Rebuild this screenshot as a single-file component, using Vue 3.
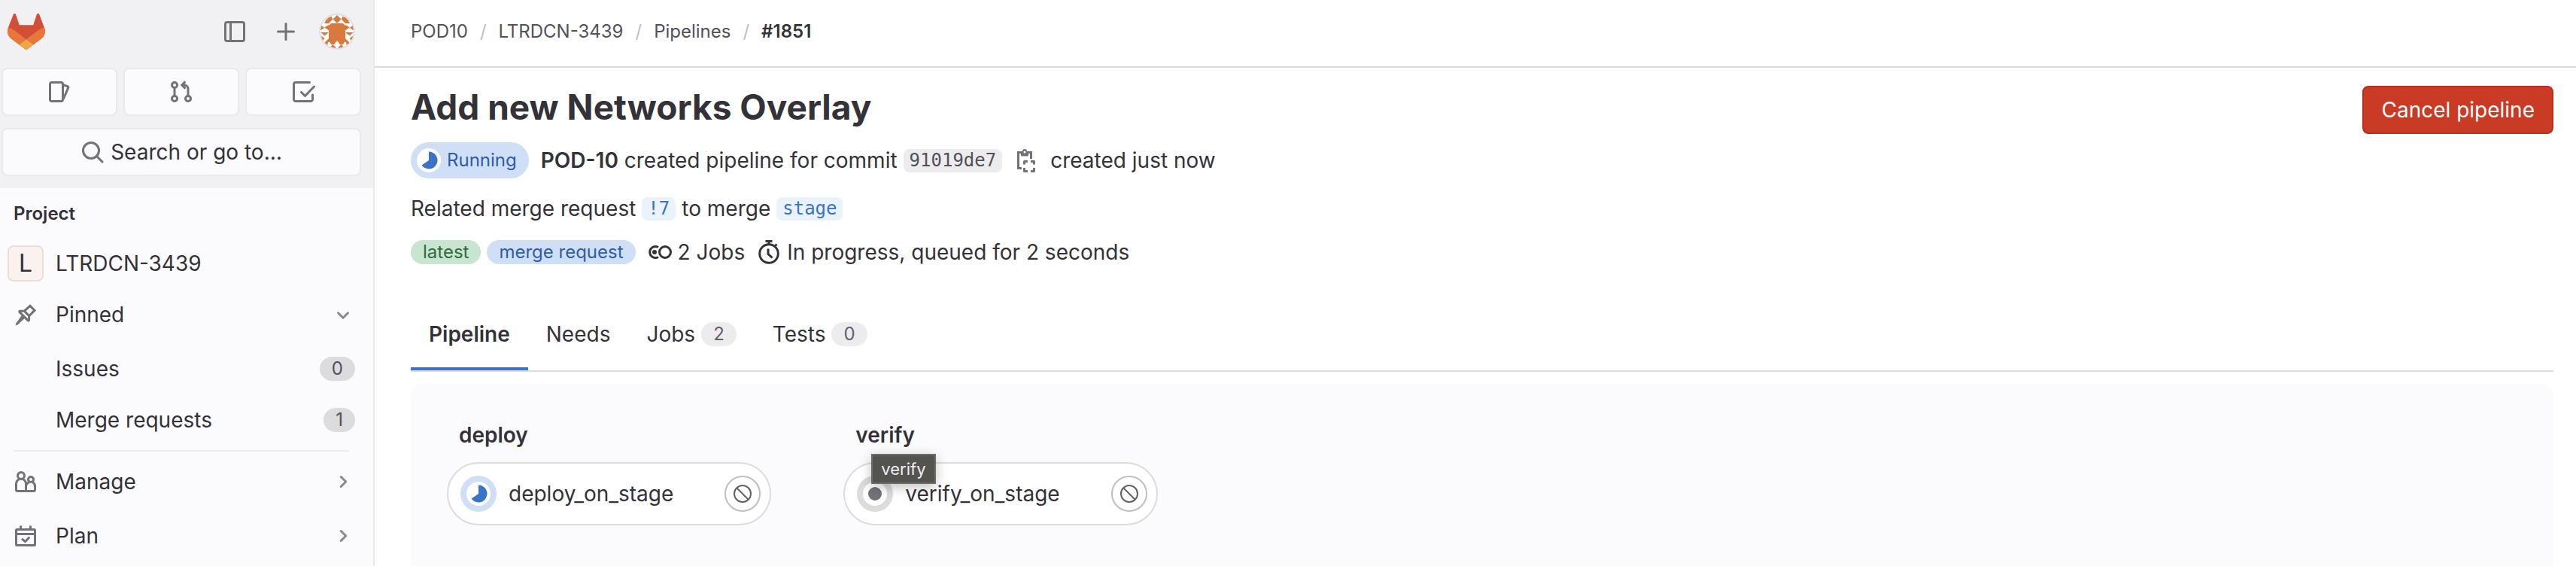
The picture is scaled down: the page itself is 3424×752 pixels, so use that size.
<script setup>
const pinned = [
  { label: 'Issues', count: 0 },
  { label: 'Merge requests', count: 1 },
]
const crumbs = ['POD10', 'LTRDCN-3439', 'Pipelines']
const tabs = [
  { label: 'Pipeline', active: true },
  { label: 'Needs' },
  { label: 'Jobs', count: 2 },
  { label: 'Tests', count: 0 },
]
const stages = [
  { name: 'deploy', job: 'deploy_on_stage', status: 'running' },
  { name: 'verify', job: 'verify_on_stage', status: 'created', tip: true },
]
</script>

<template>
  <div class="page">
    <aside class="sidebar">
      <div class="side-top">
        <div class="brand-row">
          <a href="#" class="brand" aria-label="Homepage">
            <svg width="50" height="48" viewBox="0 0 25 24">
              <path fill="#d15035" d="m24.507 9.5-.034-.09L21.082.562a.896.896 0 0 0-1.694.091l-2.29 7.01H7.825L5.535.653a.898.898 0 0 0-1.694-.09L.451 9.411.416 9.5a6.297 6.297 0 0 0 2.09 7.278l.012.01.03.022 5.16 3.867 2.56 1.935 1.554 1.176a1.051 1.051 0 0 0 1.268 0l1.555-1.176 2.56-1.935 5.197-3.89.014-.01A6.297 6.297 0 0 0 24.507 9.5Z" />
              <path fill="#e9763b" d="m24.507 9.5-.034-.09a11.44 11.44 0 0 0-4.56 2.051l-7.447 5.632 4.742 3.584 5.197-3.89.014-.01A6.297 6.297 0 0 0 24.507 9.5Z" />
              <path fill="#eea843" d="m7.707 20.677 2.56 1.935 1.555 1.176a1.051 1.051 0 0 0 1.268 0l1.555-1.176 2.56-1.935-4.743-3.584-4.755 3.584Z" />
              <path fill="#e9763b" d="M5.01 11.461a11.43 11.43 0 0 0-4.56-2.05L.416 9.5a6.297 6.297 0 0 0 2.09 7.278l.012.01.03.022 5.16 3.867 4.745-3.584-7.444-5.632Z" />
            </svg>
          </a>
          <div class="brand-actions">
            <button class="bare" aria-label="Primary navigation sidebar">
              <svg class="icon" viewBox="0 0 16 16"><rect x="1.75" y="1.75" width="12.5" height="12.5" rx="1.2" /><path d="M5.25 2v12" /></svg>
            </button>
            <button class="bare" aria-label="Create new">
              <svg class="icon round" viewBox="0 0 16 16"><path d="M8 2.75v10.5M2.75 8h10.5" /></svg>
            </button>
            <button class="bare" aria-label="User menu">
              <svg width="48" height="48" viewBox="0 0 48 48">
                <defs><clipPath id="face"><circle cx="24" cy="24" r="22" /></clipPath></defs>
                <circle cx="24" cy="24" r="24" fill="#e0e0e4" />
                <g clip-path="url(#face)">
                  <path fill="#fff" d="M0 0h48v48H0z" />
                  <g fill="#d9783f">
                    <path d="M13 16l3-3h16l3 3v20l-3 5h-4l-4-5-4 5h-4l-3-5z" />
                    <path d="m24 2 5.500 5.500L24 13l-5.500-5.500z" />
                    <path d="m13 47 5.500-6 5.500 6zM24 47l5.500-6 5.500 6z" />
                    <g v-for="side in ['', 'translate(48) scale(-1 1)']" :key="side" :transform="side || undefined">
                      <path d="M7 13l2-4 4-4 4-1 1 4-5 5z" />
                      <path d="M2 15l5 3.500L13 15v7.500l-5.500-4-5.500 4z" />
                      <path d="M2 25h11l-5.500 4.500z" />
                      <path d="M2 29l5.500 4-3.500 4-3-4z" />
                      <path d="M8 42v-4l5-5h3v4l-4 1-1 5z" />
                    </g>
                  </g>
                </g>
              </svg>
            </button>
          </div>
        </div>
        <div class="shortcuts">
          <button aria-label="Issues">
            <svg class="icon" viewBox="0 0 16 16"><rect x="1.75" y="1.75" width="8.5" height="12.5" rx="1.200" /><path d="m10.500 3.400 2.900.950a.7.7 0 0 1 .450.950l-3.350 7.700" /></svg>
          </button>
          <button aria-label="Merge requests">
            <svg class="icon" viewBox="0 0 16 16"><circle cx="3.500" cy="3.500" r="1.750" /><circle cx="3.500" cy="12.500" r="1.750" /><circle cx="12.500" cy="12.500" r="1.750" /><path d="M3.500 5.250v5.500M12.500 10.750V6a2.500 2.500 0 0 0-2.500-2.500H8.500M10.700 1.200 8.400 3.500l2.300 2.300" /></svg>
          </button>
          <button aria-label="To-Do List">
            <svg class="icon round" viewBox="0 0 16 16"><path d="M12.250 1.750H3A1.250 1.250 0 0 0 1.750 3v10A1.250 1.250 0 0 0 3 14.250h10A1.250 1.250 0 0 0 14.250 13v-3M6.750 8.250l2.500 2.500 6-6.250" /></svg>
          </button>
        </div>
        <button class="search">
          <svg class="icon round" viewBox="0 0 16 16"><circle cx="7" cy="7" r="5.250" /><path d="m11 11 3.500 3.500" /></svg>
          Search or go to…
        </button>
      </div>

      <nav class="side-nav">
        <h2>Project</h2>
        <a href="#" class="item">
          <span class="avatar">L</span>
          <span>LTRDCN-3439</span>
        </a>
        <a href="#" class="item">
          <svg class="icon lead" viewBox="0 0 16 16"><path d="M11 2.200 14 5.200 10.300 8.900v2.600c0 .5-.3.700-.7.400L4 6.300c-.3-.3-.1-.7.300-.7h2.900zM7.200 5.700l3.100 3.100" /><path class="solid" d="m6 7.800 2.100 2.100-5.400 4.800-1.500.5.500-1.500z" /></svg>
          <span class="grow">Pinned</span>
          <svg class="icon faint round" viewBox="0 0 16 16"><path d="m4.750 6.900 3.250 3.250 3.250-3.250" /></svg>
        </a>
        <ul class="pinned">
          <li v-for="p in pinned" :key="p.label">
            <a href="#" class="item sub">
              <span class="grow">{{ p.label }}</span>
              <span class="count dark">{{ p.count }}</span>
            </a>
          </li>
        </ul>
        <hr />
        <a href="#" class="item spaced">
          <svg class="icon lead" viewBox="0 0 16 16"><circle cx="5" cy="4" r="2.250" /><circle cx="11.500" cy="6.500" r="1.750" /><path d="M3.800 6.250C2.500 7 1.750 8 1.750 9.500v3.750c0 .6.400 1 1 1h4.500c.6 0 1-.4 1-1V9.500C8.250 8 7.500 7 6.200 6.250M8.400 14.250h4.850c.6 0 1-.4 1-1V11c0-1.400-.6-2.200-1.600-2.700M10.300 8.300c-1 .5-1.600 1-2 2" /></svg>
          <span class="grow">Manage</span>
          <svg class="icon faint round" viewBox="0 0 16 16"><path d="m6.600 4.750 3.250 3.250-3.250 3.250" /></svg>
        </a>
        <a href="#" class="item spaced">
          <svg class="icon lead" viewBox="0 0 16 16"><rect x="1.750" y="3.750" width="12.500" height="10.500" rx=".500" /><path d="M2 6.750h12M4.750 1.250v2.500M11.250 1.250v2.500" /><path class="cap" d="m6 10.300 1.700 1.500 2.500-2.500" /></svg>
          <span class="grow">Plan</span>
          <svg class="icon faint round" viewBox="0 0 16 16"><path d="m6.600 4.750 3.250 3.250-3.250 3.250" /></svg>
        </a>
      </nav>
    </aside>

    <div class="content">
      <nav class="crumbs" aria-label="Breadcrumb">
        <ol>
          <li v-for="c in crumbs" :key="c"><a href="#">{{ c }}</a><span class="slash">/</span></li>
          <li><a href="#" class="current">#1851</a></li>
        </ol>
      </nav>

      <main>
        <header class="head">
          <div class="summary">
            <h1>Add new Networks Overlay</h1>
            <div class="row status-row">
              <a href="#" class="status">
                <svg width="32" height="32" viewBox="0 0 16 16"><circle cx="8" cy="8" r="8" fill="#fff" /><path fill="#3b73c6" d="M8 2.250a5.750 5.750 0 1 1-4.700 9.050L8 8z" /></svg>
                Running
              </a>
              <span><a href="#" class="author">POD-10</a> created pipeline for commit</span>
              <a href="#" class="code">91019de7</a>
              <button class="bare copy" aria-label="Copy commit SHA">
                <svg width="32" height="32" viewBox="0 0 32 32" fill="none" stroke="#737278" stroke-width="3">
                  <path d="M10 26.500H5.500v-21H9M19 5.500h3.500V14" />
                  <path stroke="none" fill="#737278" fill-rule="evenodd" d="M9 4h2a3 3 0 0 1 6 0h2v5.500a1 1 0 0 1-1 1h-8a1 1 0 0 1-1-1zm5-.5a1.500 1.500 0 1 0 0 3 1.500 1.500 0 0 0 0-3z" />
                  <path stroke-linejoin="round" d="M13.500 21.500v-4H18M22 17.500h4.500v4M26.500 26v4.500H22M18 30.500h-4.500V26" />
                </svg>
              </button>
              <span>created just now</span>
            </div>
            <div class="row related">
              <span>Related merge request</span>
              <a href="#" class="code ref">!7</a>
              <span>to merge</span>
              <a href="#" class="code ref">stage</a>
            </div>
            <div class="row tags">
              <span class="tag green">latest</span>
              <span class="tag blue">merge request</span>
              <span class="stat jobs">
                <svg width="32" height="32" viewBox="0 0 32 32" fill="none" stroke="#333238" stroke-width="3"><circle cx="23" cy="16" r="7.500" /><path d="M14 9.500A7.500 7.500 0 1 0 14 22.500" /><circle cx="9" cy="16" r="3" fill="#333238" stroke="none" /></svg>
                2 Jobs
              </span>
              <span class="stat">
                <svg width="32" height="32" viewBox="0 0 32 32" fill="none" stroke="#333238" stroke-width="3"><circle cx="16" cy="18" r="12.300" /><path d="M16 2v4M24.500 7.500l2-2M15 11.500v7l5.500 5" /><path d="M11.500 1.500h9" /></svg>
                In progress, queued for 2 seconds
              </span>
            </div>
          </div>
          <button class="cancel">Cancel pipeline</button>
        </header>

        <ul class="tabs" role="tablist">
          <li v-for="t in tabs" :key="t.label">
            <a href="#" role="tab" :class="{ active: t.active }">
              {{ t.label }}
              <span v-if="t.count !== undefined" class="count">{{ t.count }}</span>
            </a>
          </li>
        </ul>

        <section class="graph">
          <div v-for="s in stages" :key="s.name" class="stage">
            <h3>{{ s.name }}</h3>
            <div class="job">
              <svg v-if="s.status === 'running'" width="48" height="48" viewBox="0 0 48 48"><circle cx="24" cy="24" r="24" fill="#cfe0f6" /><circle cx="24" cy="24" r="16" fill="#fff" /><path fill="#3b73c6" d="M24 12.500a11.500 11.500 0 1 1-9.400 18.100L24 24z" /></svg>
              <svg v-else width="48" height="48" viewBox="0 0 48 48"><circle cx="24" cy="24" r="24" fill="#dcdcde" /><circle cx="24" cy="24" r="16" fill="#fff" /><circle cx="24" cy="24" r="9" fill="#737278" /></svg>
              <a href="#" class="job-name">{{ s.job }}</a>
              <button class="job-action" aria-label="Cancel job">
                <svg width="24" height="24" viewBox="0 0 24 24" fill="none" stroke="#626168" stroke-width="2"><circle cx="12" cy="12" r="11" /><path d="m4.500 4.500 15 15" /></svg>
              </button>
            </div>
            <div v-if="s.tip" class="tip" role="tooltip">{{ s.name }}</div>
          </div>
        </section>
      </main>
    </div>
  </div>
</template>

<style>
body {
  margin: 0;
  background: #fff;
}
</style>

<style scoped>
.page {
  display: flex;
  height: 100vh;
  overflow: hidden;
  font-family: Inter, "Liberation Sans", sans-serif;
  font-size: 28px;
  line-height: 40px;
  color: #333238;
}
.page * {
  box-sizing: border-box;
}
a {
  color: inherit;
  text-decoration: none;
}
button {
  font: inherit;
  color: inherit;
  cursor: pointer;
}
ul,
ol {
  list-style: none;
  margin: 0;
  padding: 0;
}
svg {
  display: block;
  flex: none;
}
.icon {
  width: 32px;
  height: 32px;
  fill: none;
  stroke: #737278;
  stroke-width: 1.5;
}
.icon.round,
.icon .cap {
  stroke-linecap: round;
  stroke-linejoin: round;
}
.icon .solid {
  fill: #737278;
  stroke: none;
}
.icon.faint {
  stroke: #89888d;
}
.bare {
  padding: 0;
  border: 0;
  background: none;
}

.sidebar {
  flex: none;
  width: 498px;
  border-right: 2px solid #e9e9ed;
  background: #fbfbfd;
}
.side-top {
  display: flex;
  flex-direction: column;
  gap: 16px;
  padding: 18px 16px 16px 2px;
  background: #f1f1f4;
}
.brand-row {
  display: flex;
  align-items: center;
  justify-content: space-between;
  height: 48px;
  margin-bottom: 8px;
  padding: 0 8px;
}
.brand-actions {
  display: flex;
  align-items: center;
  gap: 28px;
}
.brand-actions .bare:first-child {
  margin-right: 8px;
}
.shortcuts {
  display: flex;
  gap: 8px;
}
.shortcuts button,
.search {
  display: flex;
  align-items: center;
  justify-content: center;
  height: 64px;
  padding: 0;
  border: 2px solid #e9e9ec;
  border-radius: 8px;
  background: #fbfbfd;
}
.shortcuts button {
  flex: 1;
}
.search {
  gap: 8px;
}
.side-nav h2 {
  margin: 0;
  padding: 14px 18px;
  font-size: 24px;
  font-weight: 600;
}
.item {
  display: flex;
  align-items: center;
  height: 64px;
  margin-bottom: 4px;
  padding: 0 24px 0 10px;
}
.item .lead {
  margin: 0 24px 0 8px;
}
.item .grow {
  flex: 1;
}
.avatar {
  width: 48px;
  margin-right: 16px;
  border: 2px solid #eaddda;
  border-radius: 8px;
  background: #fbf1ee;
  font-size: 32px;
  line-height: 44px;
  text-align: center;
}
.pinned {
  padding-top: 4px;
}
.item.sub {
  padding-left: 74px;
}
.count {
  padding: 0 16px;
  border-radius: 24px;
  background: #ececef;
  color: #626168;
  font-size: 24px;
  line-height: 32px;
}
.count.dark {
  background: #dcdcde;
  color: #535158;
}
hr {
  height: 2px;
  margin: 8px 32px 8px 18px;
  border: 0;
  background: #ececef;
}
.item.spaced {
  margin-bottom: 8px;
}

.content {
  flex: 1;
  display: flex;
  flex-direction: column;
  min-width: 0;
}
.crumbs {
  flex: none;
  padding: 22px 48px 26px;
  border-bottom: 2px solid #dcdcde;
  font-size: 24px;
  color: #535158;
}
.crumbs ol {
  display: flex;
}
.slash {
  margin: 0 16px;
  color: #bfbfc3;
}
.current {
  font-weight: 600;
  color: #333238;
}
main {
  flex: 1;
  display: flex;
  flex-direction: column;
  padding: 24px 30px 0 48px;
}
.head {
  display: flex;
  align-items: flex-start;
  justify-content: space-between;
}
h1 {
  margin: 0 0 19px;
  font-size: 46px;
  font-weight: 700;
  line-height: 56px;
}
.row {
  display: flex;
  align-items: center;
  white-space: nowrap;
}
.status {
  display: flex;
  align-items: center;
  gap: 8px;
  height: 48px;
  margin-right: 16px;
  padding: 0 16px 0 8px;
  border-radius: 24px;
  background: #cfe0f6;
  color: #2f5ca9;
  font-size: 24px;
}
.author {
  font-weight: 600;
}
.code {
  margin: 0 8px;
  padding: 0 8px;
  border-radius: 8px;
  background: #ececef;
  color: #535158;
  font-family: "DejaVu Sans Mono", monospace;
  font-size: 24px;
  line-height: 31px;
}
.code.ref {
  background: #eaf2fb;
  color: #3b73c6;
}
.copy {
  margin: 0 16px 0 8px;
}
.related,
.tags {
  height: 40px;
  margin-top: 20px;
}
.tags {
  margin-top: 18px;
}
.tag {
  margin-right: 8px;
  padding: 0 16px;
  border-radius: 16px;
  font-size: 24px;
  line-height: 32px;
}
.tag.green {
  background: #c8e5cf;
  color: #33693f;
}
.tag.blue {
  background: #cfe0f6;
  color: #2f5ca9;
}
.stat {
  display: flex;
  align-items: center;
  gap: 8px;
  margin-left: 16px;
}
.stat.jobs {
  margin-left: 8px;
}
.cancel {
  height: 64px;
  padding: 0 23px;
  border: 2px solid #b8301c;
  border-radius: 8px;
  background: #ca3b25;
  color: #fff;
}
.tabs {
  display: flex;
  margin-top: 41px;
  border-bottom: 2px solid #dcdcde;
}
.tabs a {
  display: flex;
  align-items: center;
  gap: 8px;
  height: 96px;
  padding: 0 24px;
}
.tabs a.active {
  font-weight: 600;
  box-shadow: inset 0 -4px #3b73c6;
}
.graph {
  flex: 1;
  display: flex;
  align-items: flex-start;
  gap: 96px;
  margin-top: 16px;
  padding: 48px;
  border-radius: 16px 16px 0 0;
  background: #fbfafd;
}
.stage {
  position: relative;
}
h3 {
  margin: 0 0 16px;
  padding-left: 16px;
  font-size: 28px;
  font-weight: 600;
}
.job {
  display: flex;
  align-items: center;
  gap: 16px;
  height: 84px;
  padding: 0 12px 0 16px;
  border: 2px solid #dcdcde;
  border-radius: 42px;
  background: #fff;
}
.job-name {
  margin-right: 52px;
}
.job-action {
  display: flex;
  align-items: center;
  justify-content: center;
  width: 48px;
  height: 48px;
  padding: 0;
  border: 2px solid #bfbfc3;
  border-radius: 50%;
  background: #fff;
}
.tip {
  position: absolute;
  top: 45px;
  left: 37px;
  padding: 0 11px;
  border: 2px solid #6c6c68;
  background: #53534f;
  color: #eee;
  font-size: 22px;
  line-height: 36px;
  box-shadow: 0 4px 16px rgba(0, 0, 0, 0.25);
}
</style>
